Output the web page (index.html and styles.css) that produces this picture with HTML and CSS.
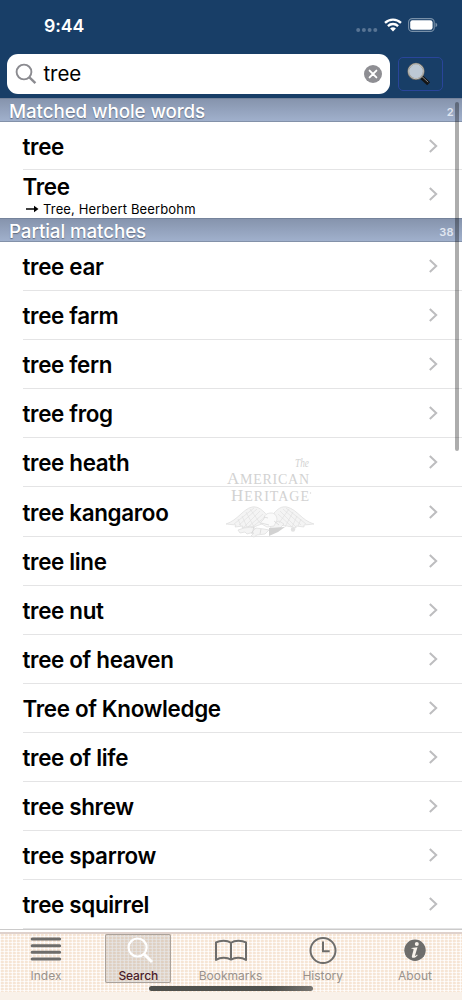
FILE: index.html
```html
<!DOCTYPE html>
<html lang="en">
<head>
<meta charset="utf-8">
<title>Dictionary search</title>
<link rel="stylesheet" href="styles.css">
</head>
<body>
<svg class="defs" width="0" height="0" aria-hidden="true">
  <symbol id="chevron" viewBox="0 0 10 16"><path d="M1.8 2 8.2 8 1.8 14" fill="none" stroke="#bdbdbf" stroke-width="2"/></symbol>
</svg>
<div class="screen">
  <header class="top">
    <div class="status">
      <span class="time">9:44</span>
      <span class="status-icons">
        <svg width="22" height="6" viewBox="0 0 22 6" class="cell"><g fill="#587494"><circle cx="2.2" cy="3" r="2"/><circle cx="7.9" cy="3" r="2"/><circle cx="13.6" cy="3" r="2"/><circle cx="19.3" cy="3" r="2"/></g></svg>
        <svg width="18" height="14" viewBox="0 0 18 14" class="wifi"><g fill="none" stroke="#fff" stroke-width="2.3"><path d="M1 4.9C5.5.5 12.5.5 17 4.9"/><path d="M3.9 8.1c2.9-2.8 7.3-2.8 10.2 0"/></g><path d="M6.1 10.4c1.7-1.5 4.1-1.5 5.8 0L9 13.4z" fill="#fff"/></svg>
        <svg width="30" height="14" viewBox="0 0 30 14" class="battery"><rect x=".6" y=".6" width="25.6" height="12.8" rx="3.7" fill="none" stroke="#7890a8" stroke-width="1.1"/><rect x="2.2" y="2.2" width="22.4" height="9.6" rx="2.2" fill="#fff"/><path d="M27.5 4.8c2.3.7 2.3 3.7 0 4.4z" fill="#7890a8"/></svg>
      </span>
    </div>
    <div class="search-row">
      <div class="field">
        <svg width="22" height="22" viewBox="0 0 22 22"><g fill="none" stroke="#8b8b90" stroke-width="1.9"><circle cx="9" cy="9" r="7.4"/><path d="m14.2 14.2 6.2 6" stroke-width="2.4"/></g></svg>
        <span class="query">tree</span>
        <svg width="18" height="18" viewBox="0 0 18 18"><circle cx="9" cy="9" r="9" fill="#8e8e93"/><path d="m5.6 5.6 6.8 6.8m0-6.8-6.8 6.8" stroke="#fff" stroke-width="1.9" stroke-linecap="round"/></svg>
      </div>
      <div class="mode">
        <svg width="24" height="25" viewBox="0 0 24 25"><path d="m14.800 15.400 6.800 6.400" stroke="#141414" stroke-width="4.200"/><path d="m14.800 14.400 6.400 5.800" stroke="#8a8a8a" stroke-width="1"/><circle cx="9" cy="9.300" r="7.800" fill="#bdc9d5" stroke="#73716b" stroke-width="1.700"/><circle cx="9" cy="9.300" r="7.500" fill="none" stroke="#d7d5cf" stroke-width=".8"/></svg>
      </div>
    </div>
  </header>
  <main class="results">
    <section>
      <h2 class="section"><span>Matched whole words</span><small>2</small></h2>
      <div class="row"><b>tree</b><svg class="chev"><use href="#chevron"/></svg></div>
      <div class="row detailed last"><div class="entry"><b>Tree</b><p><svg width="13" height="10" viewBox="0 0 13 10"><path d="M0 5h10" stroke="#000" stroke-width="1.5"/><path d="M8 1.8 12.5 5 8 8.2z"/></svg><span>Tree, Herbert Beerbohm</span></p></div><svg class="chev"><use href="#chevron"/></svg></div>
    </section>
    <section>
      <h2 class="section"><span>Partial matches</span><small>38</small></h2>
      <div class="row"><b>tree ear</b><svg class="chev"><use href="#chevron"/></svg></div>
      <div class="row"><b>tree farm</b><svg class="chev"><use href="#chevron"/></svg></div>
      <div class="row"><b>tree fern</b><svg class="chev"><use href="#chevron"/></svg></div>
      <div class="row"><b>tree frog</b><svg class="chev"><use href="#chevron"/></svg></div>
      <div class="row"><b>tree heath</b><svg class="chev"><use href="#chevron"/></svg></div>
      <div class="row"><b>tree kangaroo</b><svg class="chev"><use href="#chevron"/></svg></div>
      <div class="row"><b>tree line</b><svg class="chev"><use href="#chevron"/></svg></div>
      <div class="row"><b>tree nut</b><svg class="chev"><use href="#chevron"/></svg></div>
      <div class="row"><b>tree of heaven</b><svg class="chev"><use href="#chevron"/></svg></div>
      <div class="row"><b>Tree of Knowledge</b><svg class="chev"><use href="#chevron"/></svg></div>
      <div class="row"><b>tree of life</b><svg class="chev"><use href="#chevron"/></svg></div>
      <div class="row"><b>tree shrew</b><svg class="chev"><use href="#chevron"/></svg></div>
      <div class="row"><b>tree sparrow</b><svg class="chev"><use href="#chevron"/></svg></div>
      <div class="row"><b>tree squirrel</b><svg class="chev"><use href="#chevron"/></svg></div>
    </section>
    <svg class="watermark" width="100" height="90" viewBox="220 450 100 90">
      <g fill="#d2d2d2" font-family="Liberation Serif, serif">
        <text x="295" y="467" font-size="11.500" font-style="italic" textLength="14" lengthAdjust="spacingAndGlyphs">The</text>
        <text x="227" y="484" font-size="17" textLength="82" lengthAdjust="spacing">A<tspan font-size="14">MERICAN</tspan></text>
        <text x="231" y="500.500" font-size="17" textLength="78" lengthAdjust="spacing">H<tspan font-size="14">ERITAGE</tspan></text>
      </g>
      <circle cx="310.500" cy="493" r=".7" fill="#d8d8d8"/>
      <g fill="#f4f4f4" stroke="#dddddd" stroke-width=".7" stroke-linejoin="round">
        <path d="M267 515c-4-4-8-9-15-8-9 2-14 13-26 17l10 1-1 2 8-1-1 2 9-2 0 2 8-3 8-3z"/>
        <path d="M274 513c4-4 7-7 13-6 11 3 14 13 27 17l-10 1 0 2-8-1 0 2-9-2-9-1-4-5z"/>
        <path d="M238 530l6-2 8-1 5 2-3 3-7 2-2-2-5 1z"/>
        <path d="M251 533l5-5 8 1 5 1-4 4-8 1-3 2-3-1 3-3z"/>
        <path d="M270 524l9-3 5 3-4 4-9 1z"/>
        <path d="M264 519c0-4 3-6 7-6 4 0 6 3 6 7l-3 6-7 1-7-4z" fill="#fafafa"/>
      </g>
      <g fill="none" stroke="#dedede" stroke-width=".6">
        <path d="M254 508l-20 16m23-15-18 16m21-14-16 16m19-13-15 13m17-10-14 11M250 509l10 14m-14-11 8 15m-12-11 5 11m-9-8 3 7M286 508l20 16m-23-15 18 16m-21-14 16 16m-18-13 14 13M289 509l-10 14m14-11-8 15m12-11-5 11m9-8-3 7"/>
        <path d="M264 517l4 1m-7 5 8 2m-15 2-2 7m9-5-1 5m14-13 5 4" stroke="#cfcfcf"/>
      </g>
      <path d="m269 528 16-1-7 5-9 4z" fill="#d2d2d2"/><circle cx="293" cy="529.500" r="2.200" fill="#e2e2e2"/>
    </svg>
    <i class="scroll"></i>
  </main>
  <nav class="tabs">
    <div class="tab"><svg width="32" height="28" viewBox="0 0 32 28"><g stroke="#6e6d6b" stroke-width="3.100" stroke-linecap="round"><path d="M2.200 3h27.400M2.200 9.700h27.400M2.200 16.300h27.400M2.200 23h27.400"/></g></svg><span>Index</span></div>
    <div class="tab active"><svg width="32" height="28" viewBox="0 0 32 28"><g fill="none" stroke="#fff"><circle cx="14.600" cy="11.500" r="9" stroke-width="2.200"/><path d="m21 18 8 8" stroke-width="3"/></g></svg><span>Search</span></div>
    <div class="tab"><svg width="34" height="28" viewBox="0 0 34 28"><path d="M17 6.700C12.800 3.800 6 4.400 2 6.300v17.600c4.300-2.700 11-2.800 15-.3 4-2.500 10.700-2.400 15 .3V6.300C28 4.400 21.200 3.800 17 6.700zv17" fill="none" stroke="#6e6d6b" stroke-width="2" stroke-linejoin="round"/></svg><span>Bookmarks</span></div>
    <div class="tab"><svg width="30" height="28" viewBox="0 0 30 28"><g fill="none" stroke="#6e6d6b"><circle cx="15" cy="14.500" r="12.500" stroke-width="2"/><path d="M15 5.500v9.800h6.700" stroke-width="2"/></g></svg><span>History</span></div>
    <div class="tab"><svg width="24" height="28" viewBox="0 0 24 28"><circle cx="12" cy="14.300" r="10.700" fill="#6e6d6b"/><circle cx="13.800" cy="7.900" r="2" fill="#f8f2eb"/><path d="m8.500 12 6-.8-2.500 8.300c-.2.900.4.700 2-.9l.7.600c-2 2.800-6.500 3.900-5.800.8l1.600-5.900c.3-1.100 0-1.300-2-1.300z" fill="#f8f2eb"/></svg><span>About</span></div>
    <i class="home"></i>
  </nav>
</div>
</body>
</html>
```

FILE: styles.css
```css
* { box-sizing: border-box; }
body { margin: 0; font-family: Inter, "Liberation Sans", sans-serif; color: #000; }
.defs { position: absolute; }
.screen { width: 462px; height: 1000px; overflow: hidden; display: flex; flex-direction: column; background: #fff; }
.top { height: 98px; flex: none; background: #183e67; }
.status { height: 54px; display: flex; justify-content: space-between; padding: 16px 24px 0 44px; color: #fff; }
.time { font-size: 17.7px; line-height: 20px; font-weight: 600; letter-spacing: -.1px; }
.status-icons { display: flex; align-items: flex-start; }
.cell { margin-top: 11px; }
.wifi { margin: 2px 0 0 6px; }
.battery { margin: 2px 0 0 6px; }
.search-row { display: flex; align-items: center; gap: 8px; padding: 0 19px 0 7px; }
.field { display: flex; align-items: center; width: 383px; height: 40px; background: #fff; border-radius: 11px; padding: 0 8px 0 8px; }
.query { flex: 1; padding: 0 0 2px 6.5px; font-size: 20.5px; letter-spacing: -.1px; }
.mode { width: 45px; height: 34px; border: 1px solid #29459a; border-radius: 5px; padding: 4px 0 0 8px; }
.mode svg { display: block; }
.results { position: relative; height: 831px; flex: none; overflow: hidden; }
.section { height: 24px; margin: 0; padding: 2px 8px 0 9px; display: flex; justify-content: space-between; align-items: center; border-top: 1px solid #75839b; border-bottom: 1px solid #8391a9; background: linear-gradient(#8694ad, #a0b0cc); color: #fff; font-size: 18.8px; letter-spacing: -.1px; font-weight: 500; text-shadow: 0 1px 1px #5f6c82; }
.section small { font-size: 11px; letter-spacing: .4px; font-weight: 600; color: #e0e6f0; text-shadow: none; padding-top: 1px; }
.row { height: 49.1px; margin-left: 23px; padding-right: 24px; display: flex; align-items: center; justify-content: space-between; border-bottom: 1px solid #e4e4e5; }
section:first-child .row { height: 48px; }
.row.last { border-bottom: 0; }
.row b { display: block; margin-left: -.5px; font-size: 22.4px; line-height: 26px; font-weight: 600; letter-spacing: -.33px; }
.row > b { padding-top: 2px; }
.chev { width: 10px; height: 16px; flex: none; }
.entry { height: 48px; padding-top: 4px; }
.entry p { margin: 0; padding: 0 0 0 3px; height: 18px; display: flex; align-items: center; gap: 4px; font-size: 13px; line-height: 18px; letter-spacing: .15px; }
.watermark { position: absolute; left: 220px; top: 352px; }
.scroll { position: absolute; right: 3px; top: 4px; width: 4px; height: 349px; border-radius: 2px; background: rgba(0,0,0,.32); }
.tabs {
  position: relative; flex: 1; display: flex; justify-content: space-between; padding: 4px 14px 0 13px;
  border-top: 1px solid #cbcaca;
  background:
    linear-gradient(#fff 0 2px, #dfd2cd 2px 4px, transparent 4px 62px, #f9f1e9 62px),
    repeating-linear-gradient(90deg, rgba(255,255,255,.7) 0 1px, rgba(225,190,155,.1) 1px 3px, transparent 3px 4px),
    repeating-linear-gradient(rgba(255,255,255,.8) 0 1px, rgba(225,190,155,.08) 1px 3px),
    #faede1;
}
.tab { width: 66px; height: 49px; display: flex; flex-direction: column; align-items: center; font-size: 12px; line-height: 15px; color: #99928c; letter-spacing: 0; }
.tab svg { margin-top: 2px; flex: none; }
.tab span { margin-top: 4px; }
.tab.active { color: #4b1c29; font-weight: 500; letter-spacing: -.1px; box-shadow: inset 0 0 0 1px #aaa29b; border-radius: 2px; background: rgba(110,105,100,.17); }
.tab.active svg { margin-left: 2px; }
.home { position: absolute; left: 149px; top: 55.5px; width: 164px; height: 5.5px; border-radius: 3px; background: linear-gradient(90deg, #50514d 0 75%, #777571); }
```
